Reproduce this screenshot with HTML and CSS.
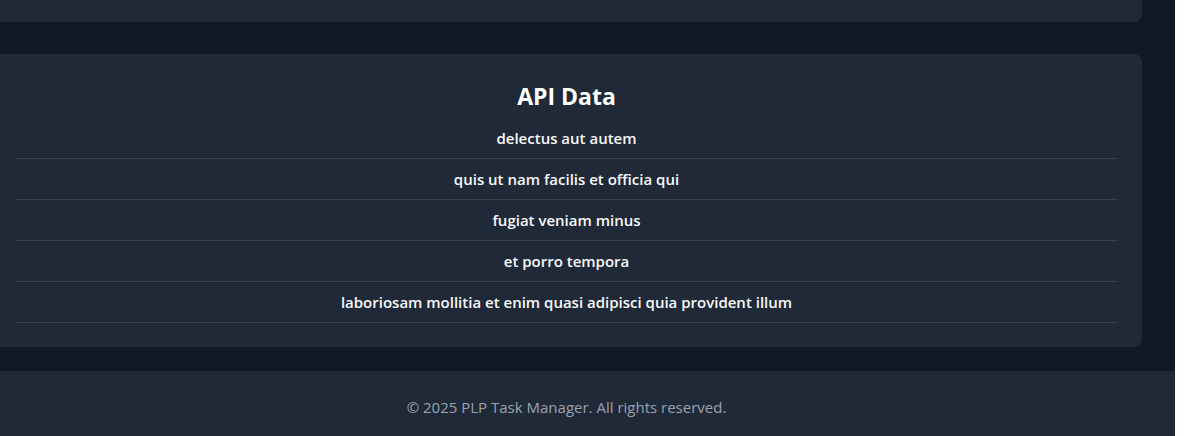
FILE: index.html
```html
<!DOCTYPE html>
<html lang="en">
<head>
<meta charset="utf-8">
<title>PLP Task Manager</title>
<link rel="stylesheet" href="styles.css">
</head>
<body>
<div class="page">
  <main class="main">
    <section class="card card-top"></section>
    <section class="card api">
      <h2 class="api-title">API Data</h2>
      <ul class="api-list">
        <li class="api-item">delectus aut autem</li>
        <li class="api-item">quis ut nam facilis et officia qui</li>
        <li class="api-item">fugiat veniam minus</li>
        <li class="api-item">et porro tempora</li>
        <li class="api-item">laboriosam mollitia et enim quasi adipisci quia provident illum</li>
      </ul>
    </section>
  </main>
  <footer class="footer">
    <p class="footer-text">© 2025 PLP Task Manager. All rights reserved.</p>
  </footer>
</div>
</body>
</html>
```
FILE: styles.css
```css
html, body {
  margin: 0;
  padding: 0;
  background: #ffffff;
  height: 100%;
  overflow: hidden;
}
.page {
  width: 1217px;
  margin-left: -42px;
  background: #111827;
  font-family: "Open Sans", "Noto Sans", sans-serif;
  min-height: 436px;
}
.main {
  display: flex;
  flex-direction: column;
  gap: 32px;
  padding: 0 33px 24px 33px;
}
.card {
  background: #1f2937;
  border-radius: 8px;
}
.card-top {
  height: 22px;
  border-radius: 0 0 8px 8px;
}
.api {
  padding: 24px;
  color: #ffffff;
  text-align: center;
}
.api-title {
  margin: 0 0 6px;
  padding-top: 2px;
  font-size: 23px;
  line-height: 32px;
  font-weight: 700;
}
.api-list {
  list-style: none;
  margin: 0;
  padding: 0;
}
.api-item {
  padding: 8px 0;
  font-size: 15px;
  line-height: 24px;
  font-weight: 600;
  color: #f9fafb;
  border-bottom: 1px solid #374151;
}
.footer {
  background: #1f2937;
  padding: 24px;
  text-align: center;
}
.footer-text {
  margin: 0;
  font-size: 15px;
  line-height: 24px;
  color: #9ca3af;
}
```
